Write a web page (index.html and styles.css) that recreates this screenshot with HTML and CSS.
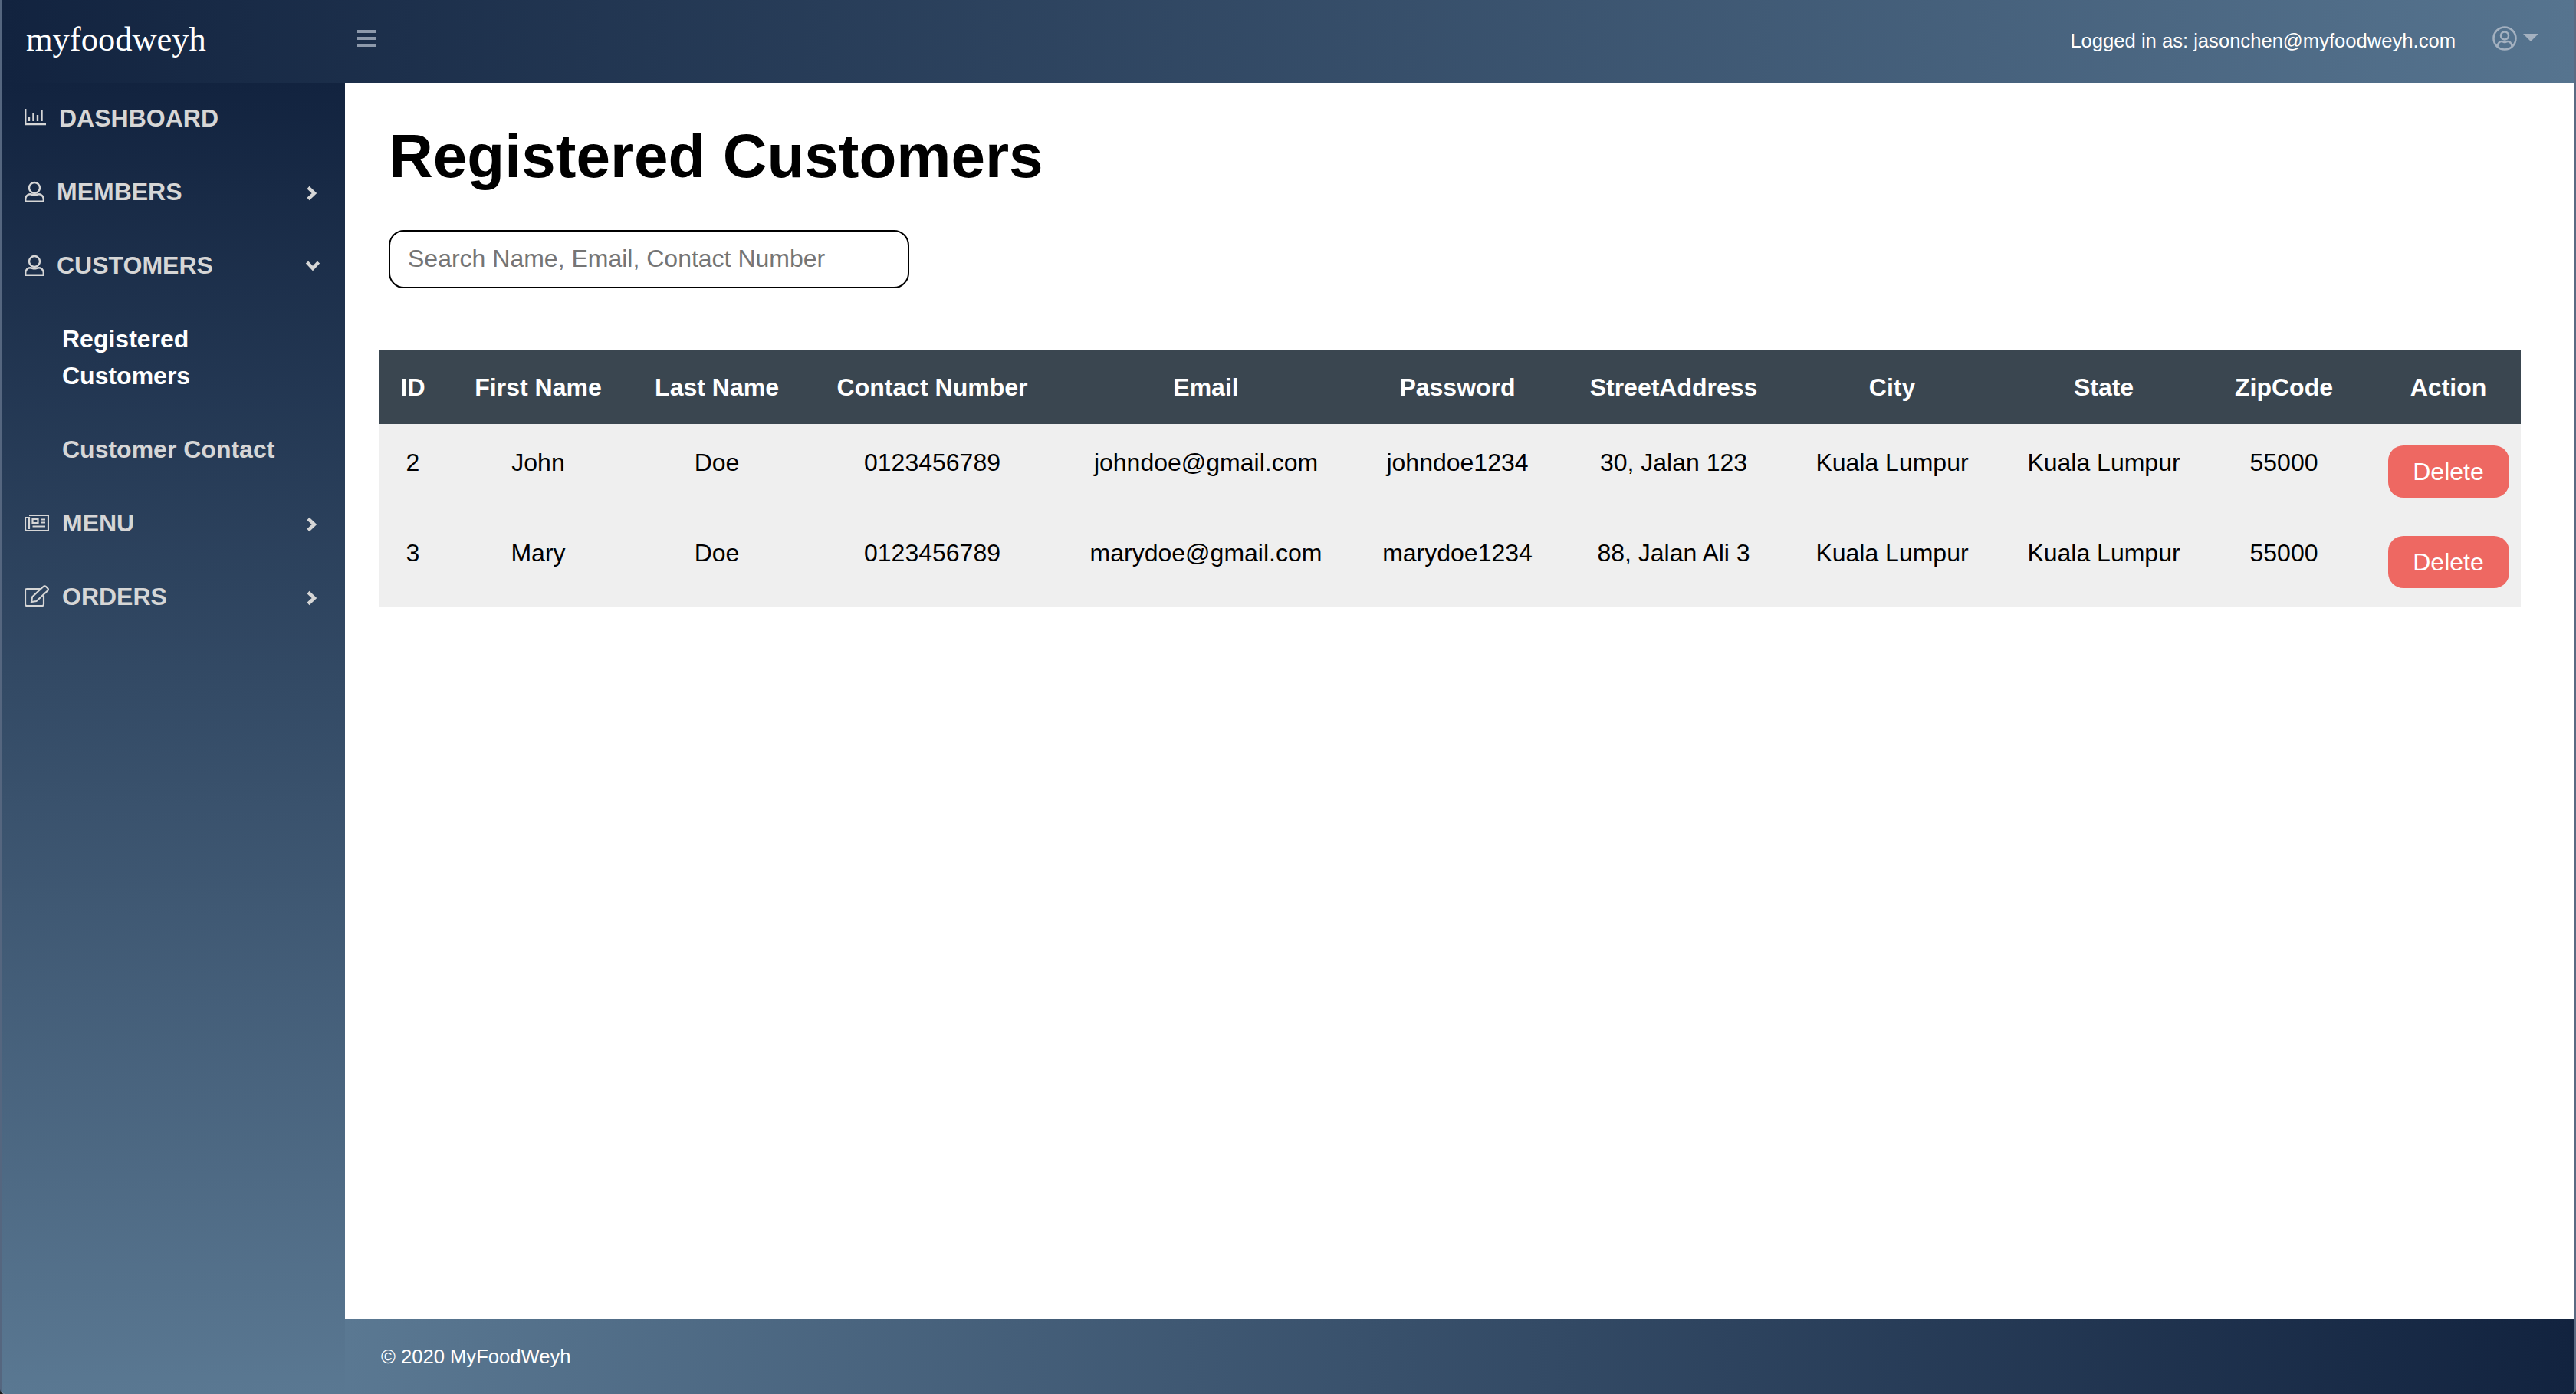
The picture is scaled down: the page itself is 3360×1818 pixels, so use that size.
FILE: index.html
```html
<!DOCTYPE html>
<html lang="en">
<head>
<meta charset="utf-8">
<title>Registered Customers</title>
<link rel="stylesheet" href="styles.css">
</head>
<body>
<div class="app">
  <header class="topbar">
    <div class="brand">myfoodweyh</div>
    <svg class="burger" viewBox="0 0 24 22"><path d="M0 0h24v4H0zM0 9h24v4H0zM0 18h24v4H0z"/></svg>
    <div class="topbar-right">
      <span class="logged">Logged in as: jasonchen@myfoodweyh.com</span>
      <svg class="avatar" viewBox="0 0 32 32"><circle cx="16" cy="16" r="14.5"/><circle cx="16" cy="12.5" r="5"/><path d="M6.5 26c1-4 3.5-6 5.500-6 2 0 2.500 1 4 1s2-1 4-1c2 0 4.500 2 5.500 6"/></svg>
      <span class="caret"></span>
    </div>
  </header>
  <div class="body">
    <nav class="sidebar">
      <a class="nav-item first">
        <svg class="ico ico-chart" viewBox="0 0 28 22"><path d="M1.200 0v20H28M6 11v5M11.500 5v11M17 8v8M22.500 1v15"/></svg>
        <span class="nav-label dash">DASHBOARD</span>
      </a>
      <a class="nav-item">
        <svg class="ico ico-user" viewBox="0 0 26 28"><circle cx="13" cy="9" r="7"/><path d="M1.200 26.800v-3c0-4 3-6.500 6-6.500 2 0 3.300 1 5.800 1s3.800-1 5.800-1c3 0 6 2.500 6 6.500v3z"/></svg>
        <span class="nav-label">MEMBERS</span>
        <svg class="chev" viewBox="0 0 14 20"><path d="M3 2.500l8 7.500-8 7.500"/></svg>
      </a>
      <a class="nav-item">
        <svg class="ico ico-user" viewBox="0 0 26 28"><circle cx="13" cy="9" r="7"/><path d="M1.200 26.800v-3c0-4 3-6.500 6-6.500 2 0 3.300 1 5.800 1s3.800-1 5.800-1c3 0 6 2.500 6 6.500v3z"/></svg>
        <span class="nav-label">CUSTOMERS</span>
        <svg class="chev-down" viewBox="0 0 20 14"><path d="M2.500 3l7.500 8 7.500-8"/></svg>
      </a>
      <a class="sub-item active">Registered<br>Customers</a>
      <a class="sub-item">Customer Contact</a>
      <a class="nav-item">
        <svg class="ico ico-news" viewBox="0 0 32 22"><path d="M6 1h25v20H3c-1.100 0-2-.9-2-2V4h5v15"/><path d="M10.500 6h7v5h-7zM21 6.500h6M21 10.500h6M10.500 15.500h16.500"/></svg>
        <span class="nav-label wide">MENU</span>
        <svg class="chev" viewBox="0 0 14 20"><path d="M3 2.500l8 7.500-8 7.500"/></svg>
      </a>
      <a class="nav-item">
        <svg class="ico ico-edit" viewBox="0 0 32 28"><path d="M21 5H3c-1.100 0-2 .9-2 2v18c0 1.100.9 2 2 2h20c1.100 0 2-.9 2-2V14"/><path d="M10 15.500L24.500 2c1-1 2.500-1 3.500 0l2 2c1 1 1 2.500 0 3.500L15.500 21 9 22z"/></svg>
        <span class="nav-label wide">ORDERS</span>
        <svg class="chev" viewBox="0 0 14 20"><path d="M3 2.500l8 7.500-8 7.500"/></svg>
      </a>
    </nav>
    <div class="main">
      <main class="content">
        <h1 class="title">Registered Customers</h1>
        <input class="search" type="text" placeholder="Search Name, Email, Contact Number">
        <table class="grid">
          <colgroup>
            <col class="c-id"><col class="c-first"><col class="c-last"><col class="c-contact"><col class="c-email"><col class="c-pass"><col class="c-street"><col class="c-city"><col class="c-state"><col class="c-zip"><col class="c-action">
          </colgroup>
          <thead>
            <tr><th>ID</th><th>First Name</th><th>Last Name</th><th>Contact Number</th><th>Email</th><th>Password</th><th>StreetAddress</th><th>City</th><th>State</th><th>ZipCode</th><th class="action">Action</th></tr>
          </thead>
          <tbody>
            <tr><td>2</td><td>John</td><td>Doe</td><td>0123456789</td><td>johndoe@gmail.com</td><td>johndoe1234</td><td>30, Jalan 123</td><td>Kuala Lumpur</td><td>Kuala Lumpur</td><td>55000</td><td class="action"><button class="delete">Delete</button></td></tr>
            <tr><td>3</td><td>Mary</td><td>Doe</td><td>0123456789</td><td>marydoe@gmail.com</td><td>marydoe1234</td><td>88, Jalan Ali 3</td><td>Kuala Lumpur</td><td>Kuala Lumpur</td><td>55000</td><td class="action"><button class="delete">Delete</button></td></tr>
          </tbody>
        </table>
      </main>
      <footer class="footer">© 2020 MyFoodWeyh</footer>
    </div>
  </div>
</div>
</body>
</html>
```
FILE: styles.css
```css
* { box-sizing: border-box; }
html, body { margin: 0; height: 100%; }
body { font-family: "Liberation Sans", Arial, sans-serif; background: #1c1c1c; color: #000; overflow: hidden; }
.app { height: 1818px; display: flex; flex-direction: column; background: #fff; border-left: 2px solid #55667f; border-right: 2px solid #5a6a82; border-radius: 0 0 6px 6px; overflow: hidden; }
.topbar { height: 108px; flex: none; display: flex; align-items: center; padding-left: 32px; background: linear-gradient(to right, #12233f, #56748f); }
.brand { font-family: "Liberation Serif", serif; font-size: 44.500px; color: #fff; width: 432px; line-height: 50px; margin-top: -6px; }
.burger { width: 24px; height: 22px; fill: #8d99ab; margin-top: -8px; }
.topbar-right { margin-left: auto; display: flex; align-items: center; padding-right: 47px; margin-top: -2px; }
.logged { color: #fff; font-size: 25.6px; }
.avatar { width: 32px; height: 32px; margin-left: 48px; fill: none; stroke: #a4b1c0; stroke-width: 2.500; margin-top: -6px; }
.caret { width: 0; height: 0; margin-left: 8px; border-left: 10px solid transparent; border-right: 10px solid transparent; border-top: 10px solid #a4b1c0; margin-top: -8px; }
.body { flex: 1; display: flex; min-height: 0; }
.sidebar { width: 448px; flex: none; padding: 0 0 0 30px; background: linear-gradient(to bottom, #12233f, #5a7892); }
.nav-item { display: flex; align-items: center; height: 96px; color: #d6d6d6; font-size: 32px; font-weight: 700; position: relative; }
.nav-item.first { margin-top: -2px; }
.nav-label { margin-left: 16px; }
.nav-label.dash { margin-left: 17px; }
.nav-label.wide { margin-left: 17px; }
.ico { fill: none; stroke: #d6d6d6; flex: none; }
.ico-chart { width: 28px; height: 22px; stroke-width: 2.400; margin-top: -2px; }
.ico-user { width: 26px; height: 28px; stroke-width: 2.400; }
.ico-news { width: 32px; height: 22px; stroke-width: 2.200; }
.ico-edit { width: 32px; height: 28px; stroke-width: 2.200; margin-top: -2px; }
.chev, .chev-down { position: absolute; fill: none; stroke: #d6d6d6; stroke-width: 4.500; }
.chev { width: 14px; height: 20px; right: 37px; top: 40px; }
.chev-down { width: 20px; height: 14px; right: 32px; top: 41px; }
.sub-item { display: block; padding: 24px 40px 24px 49px; color: #d6d6d6; font-size: 32px; font-weight: 700; line-height: 48px; }
.sub-item.active { color: #fff; }
.main { flex: 1; display: flex; flex-direction: column; min-width: 0; }
.content { flex: 1; padding: 0 68px 0 44px; min-height: 0; }
.title { margin: 50px 0 0 13px; font-size: 80px; line-height: 92px; font-weight: 700; }
.search { display: block; margin: 50px 0 0 13px; width: 679px; height: 76px; border: 2px solid #000; border-radius: 20px; padding: 0 23px 2px; font-family: inherit; font-size: 32px; background: #fff; }
.search::placeholder { color: #757575; }
.grid { margin-top: 81px; width: 2794px; table-layout: fixed; border-collapse: collapse; background: #efefef; font-size: 32px; text-align: center; }
.c-id { width: 89px; } .c-first { width: 238px; } .c-last { width: 228px; } .c-contact { width: 334px; } .c-email { width: 380px; } .c-pass { width: 276px; } .c-street { width: 288px; } .c-city { width: 282px; } .c-state { width: 270px; } .c-zip { width: 200px; } .c-action { width: 209px; }
.grid th { height: 96px; background: #3a4650; color: #fff; font-weight: 700; padding: 0; box-shadow: 0 -1px 0 #efefef; }
.grid th.action { padding-left: 20px; }
.grid td { padding: 32px 0 0; vertical-align: top; }
.grid td.action { padding: 28px 0 22px 20px; }
.grid tr:last-child td.action { padding-bottom: 24px; }
.delete { display: block; width: 158px; height: 68px; border: 0; border-radius: 20px; background: #ee6862; color: #fff; font-family: inherit; font-size: 32px; padding: 0; margin: 0 auto; }
.footer { height: 98px; flex: none; display: flex; align-items: center; padding-left: 47px; color: #fff; font-size: 25.6px; background: linear-gradient(to right, #5a7892, #12233f); }
```
